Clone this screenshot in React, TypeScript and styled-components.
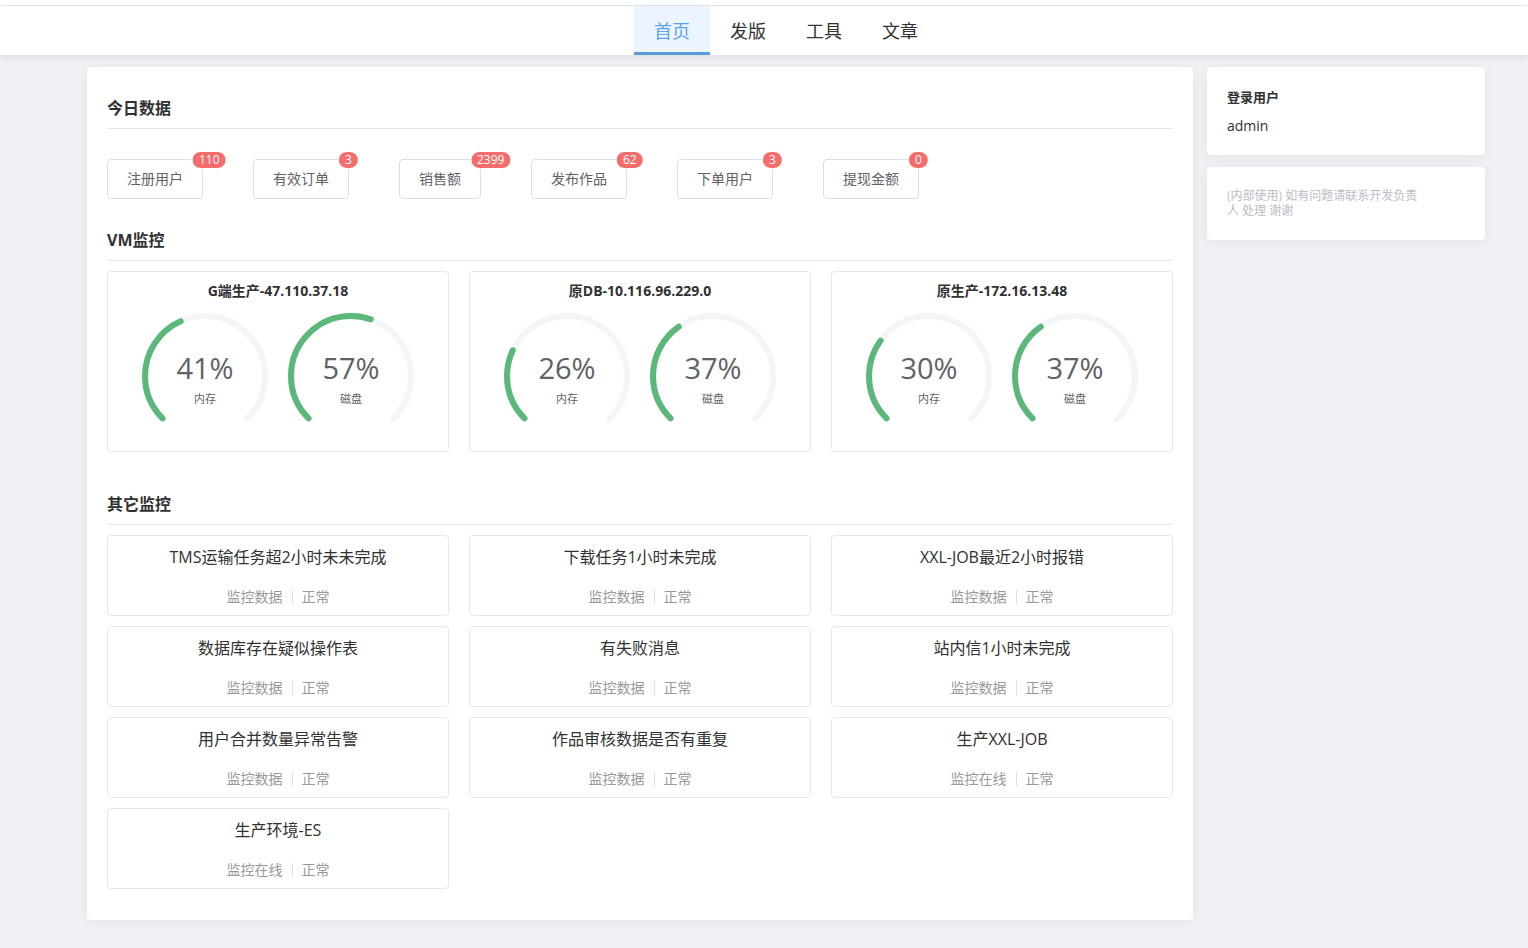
import React from "react";
import styled, { createGlobalStyle } from "styled-components";

const GlobalStyle = createGlobalStyle`
  html, body {
    margin: 0;
    padding: 0;
    background: #f0f1f4;
    font-family: "Open Sans", "Noto Sans CJK SC", "Noto Sans", sans-serif;
    color: #303133;
  }
  * { box-sizing: border-box; }
`;

const TopStrip = styled.div`
  height: 6px;
  background: #fff;
  border-bottom: 1px solid #e4e6ea;
`;

const NavBar = styled.nav`
  height: 49px;
  background: #fff;
  box-shadow: 0 3px 8px rgba(0, 0, 0, 0.07);
  display: flex;
  padding-left: 634px;
  position: relative;
  z-index: 1;
`;

const NavItem = styled.div<{ $active?: boolean }>`
  width: 76px;
  height: 49px;
  display: flex;
  align-items: center;
  justify-content: center;
  font-size: 18px;
  color: ${(p) => (p.$active ? "#5ea2e8" : "#333")};
  background: ${(p) => (p.$active ? "#ecf5ff" : "transparent")};
  border-bottom: 3px solid ${(p) => (p.$active ? "#5b9bd5" : "transparent")};
  padding-top: 1px;
  cursor: pointer;
`;

const Body = styled.div`
  display: flex;
  align-items: flex-start;
  gap: 14px;
  padding: 12px 0 29px 87px;
`;

const MainCard = styled.main`
  width: 1106px;
  background: #fff;
  border-radius: 4px;
  box-shadow: 0 2px 12px rgba(0, 0, 0, 0.06);
  padding: 30px 20px 31px;
`;

const SectionHeader = styled.h2<{ $gap?: number }>`
  margin: ${(p) => p.$gap ?? 0}px 0 0;
  font-size: 16px;
  line-height: 22px;
  font-weight: bold;
  color: #303133;
  padding-bottom: 9px;
  border-bottom: 1px solid #e6e8ec;
`;

const StatRow = styled.div`
  display: flex;
  gap: 50px;
  margin-top: 30px;
`;

const StatButton = styled.div`
  position: relative;
  height: 40px;
  padding: 0 19px 2px;
  border: 1px solid #dcdfe6;
  border-radius: 4px;
  font-size: 14px;
  color: #606266;
  display: flex;
  align-items: center;
  background: #fff;
`;

const Badge = styled.span`
  position: absolute;
  top: 0;
  right: 10px;
  transform: translateY(-50%) translateX(100%);
  height: 18px;
  line-height: 16px;
  padding: 0 6px;
  border-radius: 10px;
  border: 1px solid #fff;
  background: #f56c6c;
  color: #fff;
  font-size: 12px;
  white-space: nowrap;
`;

const Grid = styled.div<{ $rowGap: number }>`
  display: grid;
  grid-template-columns: repeat(3, 1fr);
  column-gap: 20px;
  row-gap: ${(p) => p.$rowGap}px;
  margin-top: 10px;
`;

const VmCard = styled.div`
  height: 181px;
  border: 1px solid #e6e8ec;
  border-radius: 4px;
  padding-top: 9px;
  display: flex;
  flex-direction: column;
  align-items: center;
`;

const VmTitle = styled.div`
  font-size: 14px;
  font-weight: bold;
  line-height: 20px;
  color: #303133;
`;

const GaugeRow = styled.div`
  display: flex;
  gap: 20px;
  margin-top: 12px;
`;

const GaugeWrap = styled.div`
  position: relative;
  width: 126px;
  height: 126px;
`;

const GaugeText = styled.div`
  position: absolute;
  inset: 0;
  display: flex;
  flex-direction: column;
  align-items: center;
  justify-content: center;
  color: #606266;
  padding-top: 6px;
`;

const GaugeValue = styled.div`
  font-size: 29px;
  line-height: 34px;
`;

const GaugeLabel = styled.div`
  font-size: 11px;
  line-height: 16px;
  margin-top: 6px;
`;

const MonitorCard = styled.div`
  height: 81px;
  border: 1px solid #e6e8ec;
  border-radius: 4px;
  display: flex;
  flex-direction: column;
  align-items: center;
  padding-top: 10px;
`;

const MonitorTitle = styled.div`
  font-size: 16px;
  line-height: 22px;
  color: #303133;
`;

const MonitorMeta = styled.div`
  margin-top: 19px;
  font-size: 14px;
  line-height: 20px;
  color: #999;
  display: flex;
  align-items: center;
`;

const Divider = styled.span`
  width: 1px;
  height: 14px;
  background: #dcdfe6;
  margin: 0 9px;
`;

const Side = styled.aside`
  width: 278px;
  display: flex;
  flex-direction: column;
  gap: 12px;
`;

const SideCard = styled.div`
  background: #fff;
  border-radius: 4px;
  box-shadow: 0 2px 12px rgba(0, 0, 0, 0.06);
  padding: 20px 20px 19px;
`;

const SideTitle = styled.div`
  font-size: 13px;
  font-weight: bold;
  line-height: 20px;
  color: #303133;
`;

const SideValue = styled.div`
  margin-top: 9px;
  font-size: 14px;
  line-height: 20px;
  color: #303133;
`;

const SideNote = styled.div`
  font-size: 12px;
  line-height: 15px;
  color: #b8bcc6;
  width: 192px;
  padding: 1px 0 3px;
`;

const R = 47.6;
const PERIM = 2 * Math.PI * R;
const TRACK = `M 50 50 m 0 ${R} a ${R} ${R} 0 1 1 0 ${-2 * R} a ${R} ${R} 0 1 1 0 ${2 * R}`;

function Gauge({ value, label }: { value: number; label: string }) {
  const rate = 0.75;
  const offset = -0.5 * (1 - rate) * PERIM;
  return (
    <GaugeWrap>
      <svg width="126" height="126" viewBox="0 0 100 100">
        <path
          d={TRACK}
          fill="none"
          stroke="#f3f5f9"
          strokeWidth={4.8}
          strokeLinecap="round"
          strokeDasharray={`${PERIM * rate} ${PERIM}`}
          strokeDashoffset={offset}
        />
        <path
          d={TRACK}
          fill="none"
          stroke="#5cb87a"
          strokeWidth={4.8}
          strokeLinecap="round"
          strokeDasharray={`${(PERIM * rate * value) / 100} ${PERIM}`}
          strokeDashoffset={offset}
        />
      </svg>
      <GaugeText>
        <GaugeValue>{value}%</GaugeValue>
        <GaugeLabel>{label}</GaugeLabel>
      </GaugeText>
    </GaugeWrap>
  );
}

const stats = [
  { name: "注册用户", count: 110 },
  { name: "有效订单", count: 3 },
  { name: "销售额", count: 2399 },
  { name: "发布作品", count: 62 },
  { name: "下单用户", count: 3 },
  { name: "提现金额", count: 0 },
];

const vms = [
  { name: "G端生产-47.110.37.18", mem: 41, disk: 57 },
  { name: "原DB-10.116.96.229.0", mem: 26, disk: 37 },
  { name: "原生产-172.16.13.48", mem: 30, disk: 37 },
];

const monitors = [
  { title: "TMS运输任务超2小时未未完成", kind: "监控数据" },
  { title: "下载任务1小时未完成", kind: "监控数据" },
  { title: "XXL-JOB最近2小时报错", kind: "监控数据" },
  { title: "数据库存在疑似操作表", kind: "监控数据" },
  { title: "有失败消息", kind: "监控数据" },
  { title: "站内信1小时未完成", kind: "监控数据" },
  { title: "用户合并数量异常告警", kind: "监控数据" },
  { title: "作品审核数据是否有重复", kind: "监控数据" },
  { title: "生产XXL-JOB", kind: "监控在线" },
  { title: "生产环境-ES", kind: "监控在线" },
];

export default function App() {
  return (
    <>
      <GlobalStyle />
      <TopStrip />
      <NavBar>
        <NavItem $active>首页</NavItem>
        <NavItem>发版</NavItem>
        <NavItem>工具</NavItem>
        <NavItem>文章</NavItem>
      </NavBar>
      <Body>
        <MainCard>
          <SectionHeader>今日数据</SectionHeader>
          <StatRow>
            {stats.map((s) => (
              <StatButton key={s.name}>
                {s.name}
                <Badge>{s.count}</Badge>
              </StatButton>
            ))}
          </StatRow>

          <SectionHeader $gap={30}>VM监控</SectionHeader>
          <Grid $rowGap={10}>
            {vms.map((v) => (
              <VmCard key={v.name}>
                <VmTitle>{v.name}</VmTitle>
                <GaugeRow>
                  <Gauge value={v.mem} label="内存" />
                  <Gauge value={v.disk} label="磁盘" />
                </GaugeRow>
              </VmCard>
            ))}
          </Grid>

          <SectionHeader $gap={41}>其它监控</SectionHeader>
          <Grid $rowGap={10}>
            {monitors.map((m) => (
              <MonitorCard key={m.title}>
                <MonitorTitle>{m.title}</MonitorTitle>
                <MonitorMeta>
                  {m.kind}
                  <Divider />
                  正常
                </MonitorMeta>
              </MonitorCard>
            ))}
          </Grid>
        </MainCard>

        <Side>
          <SideCard>
            <SideTitle>登录用户</SideTitle>
            <SideValue>admin</SideValue>
          </SideCard>
          <SideCard>
            <SideNote>(内部使用) 如有问题请联系开发负责人 处理 谢谢</SideNote>
          </SideCard>
        </Side>
      </Body>
    </>
  );
}
